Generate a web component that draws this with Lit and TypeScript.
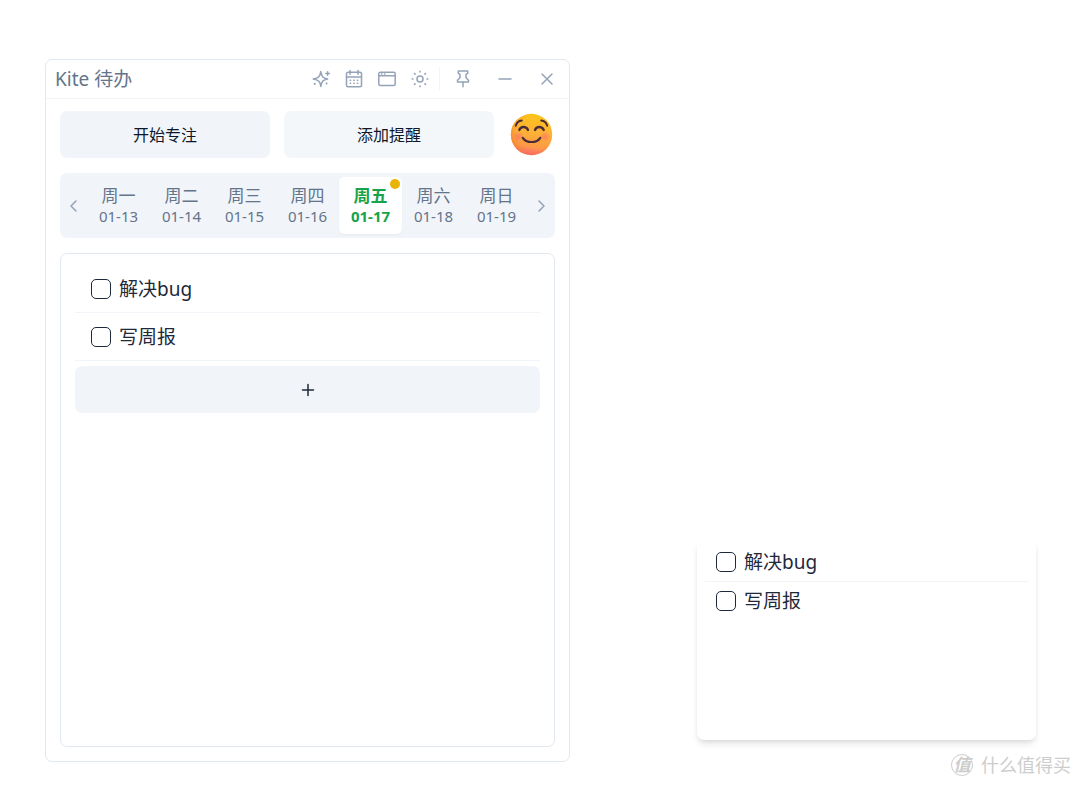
import { LitElement, html, css, svg, nothing } from "lit";
import { customElement, property, state } from "lit/decorators.js";
import { classMap } from "lit/directives/class-map.js";

interface Todo {
  id: string;
  text: string;
}

const TODOS: Todo[] = [
  { id: "bug", text: "解决bug" },
  { id: "report", text: "写周报" },
];

const DAYS = [
  ["周一", "01-13"],
  ["周二", "01-14"],
  ["周三", "01-15"],
  ["周四", "01-16"],
  ["周五", "01-17"],
  ["周六", "01-18"],
  ["周日", "01-19"],
];

const ICONS = {
  sparkles: svg`
    <path d="M9.800 2.600C10.500 7.500 11.800 9 16.600 10 11.800 11 10.500 12.500 9.800 17.400 9.100 12.500 7.800 11 2.200 10 7.800 9 9.100 7.500 9.800 2.600Z" />
    <path d="M16.600 2.700v3.600M14.800 4.500h3.600" />
    <path d="M3.700 14.800v.1M15.600 14.500v.1" stroke-width="2" />`,
  calendar: svg`
    <rect x="2.500" y="3.300" width="15" height="14.400" rx="1.500" />
    <path d="M2.500 8h15M6 1.500v3.800M14 1.500v3.800" />
    <path d="M6.200 11.300h.4M9.800 11.300h.4M13.400 11.300h.4M6.200 14.300h.4M9.800 14.300h.4M13.400 14.300h.4" />`,
  window: svg`
    <rect x="1.800" y="3.300" width="16.400" height="13.200" rx="1.500" />
    <path d="M1.800 6.800h16.400" />
    <path d="M4.600 5h.4M7.600 5h.4" />`,
  sun: svg`
    <circle cx="10" cy="10" r="3" />
    <path d="M10 2.200v.8M10 17v.8M2.200 10H3M17 10h.8M4.500 4.500l.6.6M14.900 14.900l.6.6M4.500 15.500l.6-.6M14.900 5.100l.6-.6" />`,
  pin: svg`
    <path d="M5.300 2h9.400v2.400L13 5.400v3.400l2.500 2.400v1.900h-11v-1.900L7 8.800V5.400L5.300 4.400Z" />
    <path d="M10 13.200v4.500" />`,
  minus: svg`<path d="M4 10h12" />`,
  close: svg`<path d="M5 5l10 10M15 5L5 15" />`,
  plus: svg`<path d="M10 4.500v11M4.500 10h11" />`,
  left: svg`<path d="M12 5l-5 5 5 5" />`,
  right: svg`<path d="M8 5l5 5-5 5" />`,
};

const icon = (name: keyof typeof ICONS) => html`
  <svg viewBox="0 0 20 20" width="20" height="20" fill="none" stroke="currentColor"
    stroke-width="1.5" stroke-linecap="round" stroke-linejoin="round" aria-hidden="true">
    ${ICONS[name]}
  </svg>`;

const base = css`
  *,
  *::before {
    box-sizing: border-box;
  }
  button {
    margin: 0;
    padding: 0;
    border: 0;
    background: none;
    color: inherit;
    font: inherit;
    cursor: pointer;
  }
  svg {
    display: block;
  }
`;

@customElement("todo-list")
export class TodoList extends LitElement {
  @property({ type: Boolean, reflect: true }) compact = false;
  @property({ attribute: false }) items: Todo[] = [];

  static styles = [
    base,
    css`
      :host {
        display: block;
      }
      .list {
        margin: 0;
        padding: 0;
        list-style: none;
      }
      .item {
        border-bottom: 1px solid #f1f5f9;
      }
      .label {
        display: flex;
        align-items: center;
        gap: 8px;
        height: 47px;
        padding: 0 16px;
        font-size: 19px;
        line-height: 28px;
        cursor: pointer;
      }
      .box {
        appearance: none;
        flex: none;
        width: 20px;
        height: 20px;
        margin: 0;
        border: 1px solid #1e293b;
        border-radius: 5px;
        background: #fff;
      }
      .box:checked {
        background: #16a34a;
      }
      :host([compact]) .label {
        height: 38px;
        padding: 0 11px;
      }
      :host([compact]) .item:last-child {
        border-bottom: 0;
      }
    `,
  ];

  render() {
    return html`<ul class="list">
      ${this.items.map(
        (t) => html`<li class="item">
          <label class="label" for=${t.id}>
            <input class="box" type="checkbox" id=${t.id} />
            <span>${t.text}</span>
          </label>
        </li>`
      )}
    </ul>`;
  }
}

@customElement("app-root")
export class AppRoot extends LitElement {
  @state() private day = 4;

  static styles = [
    base,
    css`
      :host {
        display: block;
        color: #1e293b;
        background: #fff;
        font-family: "Noto Sans", "Noto Sans CJK SC", sans-serif;
      }
      .desk {
        position: relative;
        display: grid;
        grid-template-columns: minmax(0, 525fr) minmax(0, 339fr);
        column-gap: 127px;
        min-height: 100vh;
        padding: 59px 44px 25px 45px;
      }
      .window {
        display: flex;
        flex-direction: column;
        border: 1px solid #e2e8f0;
        border-radius: 7px;
      }
      .bar {
        display: flex;
        align-items: center;
        justify-content: space-between;
        height: 39px;
        padding: 0 12px 0 9px;
        border-bottom: 1px solid #f1f5f9;
      }
      .title {
        margin: 0;
        color: #64748b;
        font-size: 19px;
        font-weight: 400;
        line-height: 28px;
      }
      .tools,
      .controls {
        display: flex;
        align-items: center;
        color: #94a3b8;
      }
      .tools {
        gap: 13px;
      }
      .controls {
        gap: 22px;
        margin-left: 9px;
        padding-left: 13px;
        border-left: 1px solid #f1f5f9;
        height: 24px;
      }
      .right {
        display: flex;
        align-items: center;
      }
      .body {
        flex: 1;
        display: flex;
        flex-direction: column;
        gap: 15px;
        padding: 12px 14px 14px;
      }
      .actions {
        display: flex;
        align-items: center;
        gap: 14px;
      }
      .action {
        flex: 1;
        height: 47px;
        border-radius: 7px;
        background: #f1f5f9;
        color: #0f172a;
        font-size: 16px;
        line-height: 24px;
      }
      .action.soft {
        background: #f4f7fa;
      }
      .avatar {
        margin: 0 2px;
      }
      .week {
        display: flex;
        align-items: center;
        height: 65px;
        padding: 4px;
        border-radius: 7px;
        background: #f1f5f9;
        color: #64748b;
      }
      .arrow {
        flex: none;
        color: #94a3b8;
      }
      .days {
        flex: 1;
        display: grid;
        grid-template-columns: repeat(7, 1fr);
        height: 100%;
        padding: 0 3px;
      }
      .day {
        position: relative;
        border-radius: 5px;
        font-size: 17px;
        line-height: 20px;
      }
      .day.active {
        background: #fff;
        color: #16a34a;
        font-weight: 700;
        box-shadow: 0 1px 2px #0000000d;
      }
      .date {
        display: block;
        font-size: 15px;
      }
      .dot {
        position: absolute;
        top: 2px;
        right: 2px;
        width: 10px;
        height: 10px;
        border-radius: 50%;
        background: #eab308;
      }
      .panel {
        flex: 1;
        padding: 11px 14px;
        border: 1px solid #e2e8f0;
        border-radius: 7px;
      }
      .add {
        display: flex;
        align-items: center;
        justify-content: center;
        width: 100%;
        height: 47px;
        margin-top: 5px;
        border-radius: 7px;
        background: #f1f5f9;
      }
      .note {
        align-self: end;
        min-height: 200px;
        margin-bottom: 22px;
        padding: 3px 8px;
        border-radius: 7px;
        background: #fff;
        box-shadow: 0 5px 7px -1px #0000001a, 0 2px 5px -2px #0000001a;
      }
      .mark {
        position: absolute;
        right: 9px;
        bottom: 9px;
        display: flex;
        align-items: center;
        gap: 8px;
        color: #cdcdcd;
        font-size: 18px;
        line-height: 26px;
      }
      .seal {
        width: 22px;
        height: 22px;
        border: 1px solid #cdcdcd;
        border-radius: 50%;
        font-size: 17px;
        font-weight: 700;
        font-style: italic;
        line-height: 19px;
        text-align: center;
      }
    `,
  ];

  private tool(name: keyof typeof ICONS, label: string) {
    return html`<button type="button" aria-label=${label}>${icon(name)}</button>`;
  }

  private face() {
    return html`<svg class="avatar" width="43" height="43" viewBox="0 0 43 43" role="img" aria-label="头像">
      <defs>
        <linearGradient id="skin" x1="0.600" y1="0" x2="0.450" y2="1">
          <stop offset="0" stop-color="#fcc419" />
          <stop offset="0.450" stop-color="#fdb236" />
          <stop offset="0.800" stop-color="#fb9848" />
          <stop offset="1" stop-color="#ff5d8b" />
        </linearGradient>
        <radialGradient id="blush">
          <stop offset="0" stop-color="#ff6d70" stop-opacity="0.700" />
          <stop offset="1" stop-color="#ff6d70" stop-opacity="0" />
        </radialGradient>
        <radialGradient id="rim" cx="0.580" cy="0.450" r="0.600">
          <stop offset="0.700" stop-color="#f58a1f" stop-opacity="0" />
          <stop offset="1" stop-color="#ef7d2b" stop-opacity="0.600" />
        </radialGradient>
      </defs>
      <circle cx="21.500" cy="21.500" r="20.700" fill="url(#skin)" />
      <circle cx="21.500" cy="21.500" r="20.700" fill="url(#rim)" />
      <circle cx="8" cy="23.500" r="5.500" fill="url(#blush)" />
      <circle cx="35" cy="23.500" r="5.500" fill="url(#blush)" />
      <g fill="none" stroke="#4b2b37" stroke-linecap="round">
        <path d="M9.300 17c1.500-4 7-4 8.700 0M25 17c1.500-4 7-4 8.700 0" stroke-width="2.300" />
        <path d="M12.800 24.800c3.500 5.600 14 5.600 17.500 0" stroke-width="2.200" />
        <path d="M5.800 12.800c.8-3 3-5 6-5.300M31.200 7.500c3 .3 5.200 2.300 6 5.300" stroke-width="1.900" />
      </g>
    </svg>`;
  }

  render() {
    return html`<main class="desk">
      <section class="window">
        <header class="bar">
          <h1 class="title">Kite 待办</h1>
          <div class="right">
            <div class="tools">
              ${this.tool("sparkles", "智能")} ${this.tool("calendar", "日历")}
              ${this.tool("window", "窗口")} ${this.tool("sun", "主题")}
            </div>
            <div class="controls">
              ${this.tool("pin", "置顶")} ${this.tool("minus", "最小化")}
              ${this.tool("close", "关闭")}
            </div>
          </div>
        </header>
        <div class="body">
          <div class="actions">
            <button class="action" type="button">开始专注</button>
            <button class="action soft" type="button">添加提醒</button>
            ${this.face()}
          </div>
          <nav class="week">
            <button class="arrow" type="button" aria-label="上一周">${icon("left")}</button>
            <div class="days">
              ${DAYS.map(
                ([name, date], i) => html`<button
                  type="button"
                  class=${classMap({ day: true, active: i === this.day })}
                  @click=${() => (this.day = i)}
                >
                  ${name}<span class="date">${date}</span>
                  ${i === 4 ? html`<span class="dot"></span>` : nothing}
                </button>`
              )}
            </div>
            <button class="arrow" type="button" aria-label="下一周">${icon("right")}</button>
          </nav>
          <div class="panel">
            <todo-list .items=${TODOS}></todo-list>
            <button class="add" type="button" aria-label="添加">${icon("plus")}</button>
          </div>
        </div>
      </section>
      <aside class="note">
        <todo-list compact .items=${TODOS}></todo-list>
      </aside>
      <div class="mark"><span class="seal">值</span><span>什么值得买</span></div>
    </main>`;
  }
}
